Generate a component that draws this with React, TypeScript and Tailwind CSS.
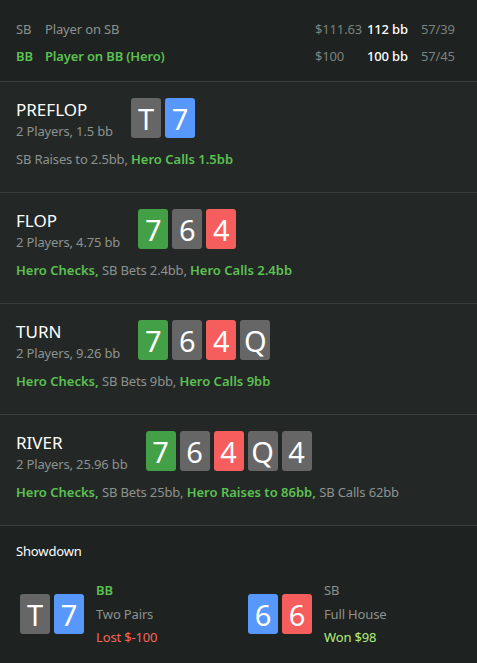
import React from "react";

type CardColor = "grey" | "blue" | "green" | "red";
const cardBg: Record<CardColor, string> = {
  grey: "bg-[#666666]",
  blue: "bg-[#5897fb]",
  green: "bg-[#43a047]",
  red: "bg-[#f65d5d]",
};

function Card({ r, c }: { r: string; c: CardColor }) {
  return (
    <div
      className={`w-[30px] h-[40px] rounded-[3px] flex items-center justify-center text-white text-[29px] leading-none ${cardBg[c]}`}
    >
      {r}
    </div>
  );
}

type Seg = { t: string; hero?: boolean };

function Street({
  title,
  sub,
  cards,
  actions,
}: {
  title: string;
  sub: string;
  cards: { r: string; c: CardColor }[];
  actions: Seg[];
}) {
  return (
    <div className="bg-[#232826] border-b border-[#3a3f3c] px-4 pt-4 pb-6">
      <div className="flex items-start gap-[18px]">
        <div className="flex flex-col">
          <div className="text-[17px] leading-[24px] text-white">{title}</div>
          <div className="text-[13px] leading-[18px] text-[#8d928f] tracking-[-0.15px]">{sub}</div>
        </div>
        <div className="flex gap-1">
          {cards.map((k, i) => (
            <Card key={i} r={k.r} c={k.c} />
          ))}
        </div>
      </div>
      <div className="mt-[10px] text-[13px] leading-[18px] text-[#8d928f] tracking-[-0.15px]">
        {actions.map((s, i) => (
          <span key={i} className={s.hero ? "font-semibold text-[#5cc052] tracking-[0px]" : ""}>
            {s.t}
          </span>
        ))}
      </div>
    </div>
  );
}

export default function App() {
  return (
    <div
      className="w-[477px] h-[663px] bg-[#1e2220] overflow-hidden"
      style={{ fontFamily: '"Noto Sans", "Open Sans", sans-serif' }}
    >
      <div className="bg-[#1e2220] border-b border-[#3a3f3c] pt-[16px] pb-[11px] px-4 text-[13px] tracking-[-0.15px]">
        <div className="flex items-center h-[27px]">
          <span className="w-[29px] text-[#8d928f]">SB</span>
          <span className="flex-1 text-[#8d928f]">Player on SB</span>
          <span className="w-[52px] text-[#7c827f]">$111.63</span>
          <span className="w-[54px] text-white font-medium">112 bb</span>
          <span className="w-[40px] text-[#7c827f]">57/39</span>
        </div>
        <div className="flex items-center h-[27px]">
          <span className="w-[29px] text-[#5cc052] font-semibold">BB</span>
          <span className="flex-1 text-[#5cc052] font-semibold">Player on BB (Hero)</span>
          <span className="w-[52px] text-[#7c827f]">$100</span>
          <span className="w-[54px] text-white font-medium">100 bb</span>
          <span className="w-[40px] text-[#7c827f]">57/45</span>
        </div>
      </div>

      <Street
        title="PREFLOP"
        sub="2 Players, 1.5 bb"
        cards={[
          { r: "T", c: "grey" },
          { r: "7", c: "blue" },
        ]}
        actions={[{ t: "SB Raises to 2.5bb, " }, { t: "Hero Calls 1.5bb", hero: true }]}
      />
      <Street
        title="FLOP"
        sub="2 Players, 4.75 bb"
        cards={[
          { r: "7", c: "green" },
          { r: "6", c: "grey" },
          { r: "4", c: "red" },
        ]}
        actions={[
          { t: "Hero Checks, ", hero: true },
          { t: "SB Bets 2.4bb, " },
          { t: "Hero Calls 2.4bb", hero: true },
        ]}
      />
      <Street
        title="TURN"
        sub="2 Players, 9.26 bb"
        cards={[
          { r: "7", c: "green" },
          { r: "6", c: "grey" },
          { r: "4", c: "red" },
          { r: "Q", c: "grey" },
        ]}
        actions={[
          { t: "Hero Checks, ", hero: true },
          { t: "SB Bets 9bb, " },
          { t: "Hero Calls 9bb", hero: true },
        ]}
      />
      <Street
        title="RIVER"
        sub="2 Players, 25.96 bb"
        cards={[
          { r: "7", c: "green" },
          { r: "6", c: "grey" },
          { r: "4", c: "red" },
          { r: "Q", c: "grey" },
          { r: "4", c: "grey" },
        ]}
        actions={[
          { t: "Hero Checks, ", hero: true },
          { t: "SB Bets 25bb, " },
          { t: "Hero Raises to 86bb, ", hero: true },
          { t: "SB Calls 62bb" },
        ]}
      />

      <div className="bg-[#1e2220] px-4 pt-[16px] tracking-[-0.15px]">
        <div className="text-[13px] leading-[18px] text-white">Showdown</div>
        <div className="flex mt-[19px] pl-1">
          <div className="w-[228px] flex items-center gap-3">
            <div className="flex gap-1">
              <Card r="T" c="grey" />
              <Card r="7" c="blue" />
            </div>
            <div className="flex flex-col text-[13px] leading-[23.5px]">
              <span className="text-[#5cc052] font-semibold">BB</span>
              <span className="text-[#8d928f]">Two Pairs</span>
              <span className="text-[#f4695c]">Lost $-100</span>
            </div>
          </div>
          <div className="flex items-center gap-3">
            <div className="flex gap-1">
              <Card r="6" c="blue" />
              <Card r="6" c="red" />
            </div>
            <div className="flex flex-col text-[13px] leading-[23.5px]">
              <span className="text-[#8d928f]">SB</span>
              <span className="text-[#8d928f]">Full House</span>
              <span className="text-[#b2ef7b]">Won $98</span>
            </div>
          </div>
        </div>
      </div>
    </div>
  );
}
